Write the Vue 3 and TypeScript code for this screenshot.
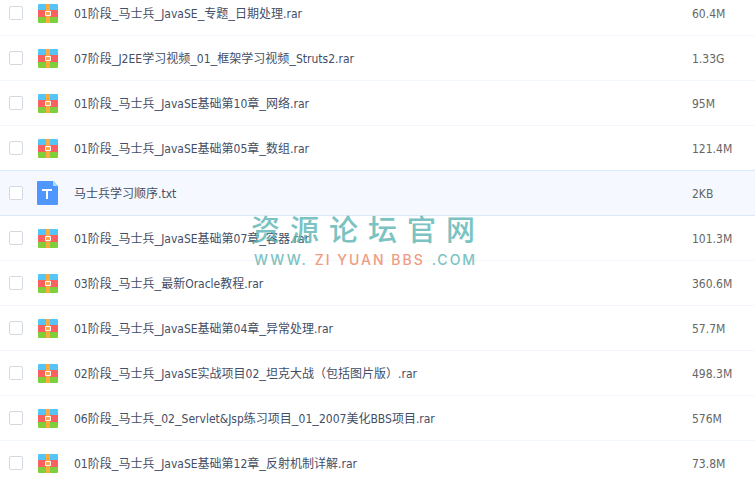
<script setup lang="ts">
import { ref } from 'vue'

interface FileEntry {
  name: string
  size: string
  kind: 'rar' | 'txt'
  checked: boolean
}

const rar = (name: string, size: string): FileEntry => ({ name, size, kind: 'rar', checked: false })

const files = ref<FileEntry[]>([
  rar('01阶段_马士兵_JavaSE_专题_日期处理.rar', '60.4M'),
  rar('07阶段_J2EE学习视频_01_框架学习视频_Struts2.rar', '1.33G'),
  rar('01阶段_马士兵_JavaSE基础第10章_网络.rar', '95M'),
  rar('01阶段_马士兵_JavaSE基础第05章_数组.rar', '121.4M'),
  { name: '马士兵学习顺序.txt', size: '2KB', kind: 'txt', checked: false },
  rar('01阶段_马士兵_JavaSE基础第07章_容器.rar', '101.3M'),
  rar('03阶段_马士兵_最新Oracle教程.rar', '360.6M'),
  rar('01阶段_马士兵_JavaSE基础第04章_异常处理.rar', '57.7M'),
  rar('02阶段_马士兵_JavaSE实战项目02_坦克大战（包括图片版）.rar', '498.3M'),
  rar('06阶段_马士兵_02_Servlet&Jsp练习项目_01_2007美化BBS项目.rar', '576M'),
  rar('01阶段_马士兵_JavaSE基础第12章_反射机制详解.rar', '73.8M'),
])

const activeIndex = ref(4)

/* Splits a file name so that its underscores can be set in a wider face. */
const nameParts = (name: string): string[] => name.split(/(_)/)
</script>

<template>
  <main class="viewport">
    <table class="files">
      <colgroup>
        <col class="col-check" />
        <col class="col-icon" />
        <col />
        <col class="col-size" />
      </colgroup>
      <tbody>
        <tr
          v-for="(file, i) in files"
          :key="file.name"
          :class="{ active: i === activeIndex }"
          @click="activeIndex = i"
        >
          <td class="check">
            <input :id="`file-${i}`" v-model="file.checked" type="checkbox" />
          </td>
          <td>
            <svg v-if="file.kind === 'rar'" class="icon" width="21" height="19" viewBox="0 0 21 19" aria-hidden="true">
              <path d="M2 0H20a1 1 0 0 1 1 1V6H1V1a1 1 0 0 1 1-1Z" fill="#55c4f7" />
              <path d="M1 6H21V13H1Z" fill="#fa6060" />
              <path d="M1 13H21V18a1 1 0 0 1-1 1H2a1 1 0 0 1-1-1Z" fill="#80cf3a" />
              <path d="M9 0H13V19H9Z" fill="#fdab3d" />
              <path d="M8.500 7.500H13.500V11.500H8.500Z" fill="#fdab3d" stroke="#fff" />
            </svg>
            <svg v-else class="icon" width="21" height="24" viewBox="0 0 21 24" aria-hidden="true">
              <path d="M1 0H16L21 5V23a1 1 0 0 1-1 1H1a1 1 0 0 1-1-1V1a1 1 0 0 1 1-1Z" fill="#4f97ff" />
              <path d="M16 0L21 5H17a1 1 0 0 1-1-1Z" fill="#a8dcfb" />
              <path d="M5 8H15V10H11V18H9V10H5Z" fill="#fff" />
            </svg>
          </td>
          <td class="name">
            <label :for="`file-${i}`"><span v-for="(part, p) in nameParts(file.name)" :key="p" :class="{ separator: part === '_' }">{{ part }}</span></label>
          </td>
          <td class="size">{{ file.size }}</td>
        </tr>
      </tbody>
    </table>

    <div class="watermark">
      <div class="site-name">资源论坛官网</div>
      <div class="site-url"><span>WWW.</span><span class="accent">ZI YUAN BBS</span><span>.COM</span></div>
    </div>
  </main>
</template>

<style>
body {
  background: #fff;
}
</style>

<style scoped>
.viewport {
  position: relative;
  height: 100vh;
  overflow: hidden;
  font: 12px/18px "DejaVu Sans Condensed", "Noto Sans CJK SC", sans-serif;
}

/* The list is scrolled slightly past the top of its first row. */
.files {
  width: 100%;
  margin-top: -9px;
  border-spacing: 0;
  table-layout: fixed;
}

.col-check {
  width: 37px;
}

.col-icon {
  width: 37px;
}

.col-size {
  width: 63px;
}

td {
  box-sizing: border-box;
  height: 45px;
  padding: 0;
  border-bottom: 1px solid #f2f6fd;
  vertical-align: middle;
}

.check {
  padding-left: 9px;
}

input {
  display: block;
  box-sizing: border-box;
  width: 14px;
  height: 14px;
  margin: 0;
  border: 1px solid #d4dae3;
  border-radius: 2px;
  background: #fff;
  appearance: none;
}

input:checked {
  border-color: #4f97ff;
  background: #4f97ff;
}

.icon {
  display: block;
}

.name,
.size {
  padding-top: 2px;
}

.name {
  overflow: hidden;
  color: #424e67;
  text-overflow: ellipsis;
  white-space: nowrap;
}

.separator {
  font-family: "Liberation Sans", sans-serif;
}

.size {
  color: #666;
}

.active td {
  border-color: #d9e8fb;
  background: #f5f9ff;
}

tr:has(+ .active) td {
  border-color: #d9e8fb;
}

.watermark {
  position: absolute;
  top: 208px;
  left: 251px;
  color: #5bb4b3;
  white-space: nowrap;
  pointer-events: none;
  opacity: 0.8;
}

.site-name {
  font: 500 29px/40px "Noto Sans CJK SC", sans-serif;
  letter-spacing: 10px;
}

.site-url {
  display: flex;
  gap: 7px;
  padding: 2px 0 0 3px;
  font: 500 14px/20px Inter, sans-serif;
  letter-spacing: 2px;
}

.accent {
  color: #ee8363;
}
</style>
